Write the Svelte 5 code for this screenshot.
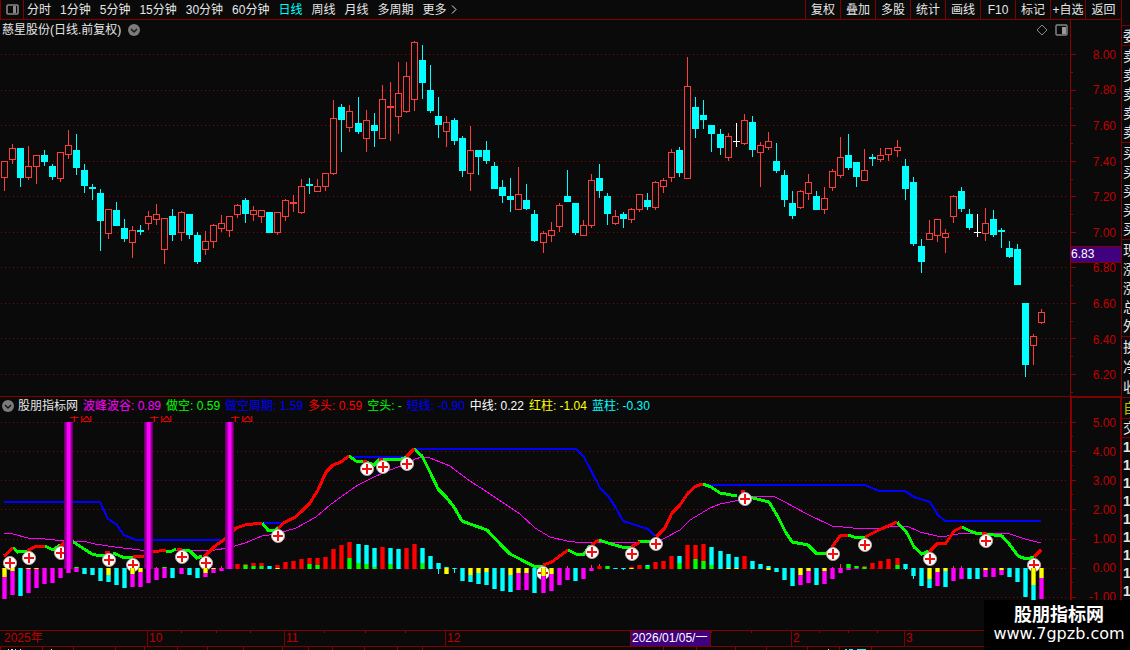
<script>
  const periods = ["分时", "1分钟", "5分钟", "15分钟", "30分钟", "60分钟", "日线", "周线", "月线", "多周期", "更多"];
  const tools = ["复权", "叠加", "多股", "统计", "画线", "F10", "标记", "+自选", "返回"];
  let current = "日线";

  // high, body top, body bottom, low, kind: r -> up, c -> down, w -> flat
  const candles = `161 161 178 191 r|144 148 160 164 r|148 148 178 187 c|146 166 178 180 r|155 155 167 184 r|150 155 162 166 c|164 166 177 180 c|152 152 179 182 r
130 145 155 159 r|134 150 168 175 c|164 170 186 193 c|184 187 189 200 c|189 193 221 251 c|209 209 234 239 r|202 210 226 226 c|219 228 239 242 c
226 230 243 258 r|225 230 232 235 c|211 216 224 230 r|204 214 220 225 r|218 218 250 264 r|209 216 235 241 c|211 212 233 241 r|214 214 235 239 c
232 235 262 264 c|231 241 250 255 r|224 225 242 248 r|215 223 229 232 r|216 216 231 237 r|204 205 215 218 r|198 200 214 223 c|206 210 215 221 r
210 210 217 223 r|212 212 233 233 c|212 212 233 235 r|199 200 217 221 r|195 202 204 212 r|179 186 213 214 r|178 184 186 194 c|179 186 192 192 r
173 173 187 191 r|100 118 174 175 r|104 107 120 152 c|105 111 128 132 r|97 123 132 134 c|110 120 139 152 r|113 125 131 147 c|85 99 139 139 r
82 106 108 141 r|62 93 117 134 r|62 76 112 113 r|41 42 100 111 r|45 60 83 99 c|65 90 111 113 c|97 116 125 138 c|116 122 132 147 r
118 120 141 145 c|136 138 171 177 c|126 150 174 191 r|150 150 157 175 c|141 150 161 164 c|162 166 189 189 c|180 187 196 203 c|178 196 200 212 c
167 194 210 210 r|184 200 209 210 c|210 214 241 242 c|231 233 243 253 r|222 230 236 242 r|203 205 227 232 r|170 196 202 202 c|203 203 233 235 c
220 225 236 236 r|174 180 226 228 r|164 178 191 198 c|193 196 214 225 c|210 216 224 225 r|212 214 219 228 c|208 209 220 223 r|194 194 210 212 r
193 200 207 210 c|181 182 208 210 r|178 180 187 193 r|149 152 178 182 r|147 150 173 177 c|57 86 179 179 r|97 107 129 138 c|100 115 120 129 c
125 125 134 152 c|129 134 148 155 c|133 136 158 161 r|123 141 142 147 w|114 120 144 145 r|116 122 150 157 c|142 145 153 187 r|132 141 148 150 r
143 161 171 173 c|170 175 200 207 c|191 203 216 219 c|190 191 208 209 r|174 182 194 200 r|191 196 210 210 c|187 198 210 214 r|169 171 188 191 r
137 157 176 178 r|134 155 168 170 c|162 162 177 187 c|149 170 181 181 r|154 157 159 166 c|148 155 160 162 r|148 148 155 161 r|140 147 151 157 r
159 166 189 200 c|177 182 244 246 c|239 246 262 273 c|220 233 240 240 r|219 219 236 242 r|229 233 238 253 r|195 196 217 223 r|187 191 209 212 c
209 214 228 230 c|214 232 233 237 w|208 223 234 241 r|210 219 235 237 c|228 230 232 248 c|241 248 257 258 c|244 249 285 285 c|303 303 365 377 c
334 336 346 365 r|309 312 323 324 r`
    .split(/[|\n]/)
    .map((row, i) => {
      const [high, top, bottom, low, kind] = row.trim().split(" ");
      return { x: centre(i), high: +high, top: +top, bottom: +bottom, low: +low, kind };
    });

  // stacked segments of every bar: colour, start, end (t and w are thin wicks)
  const bars = `y568-577 m577-599|y568-571 m571-595|c568-596|y568-569 m569-593|y568-569 m569-588|m568-584|m568-583|m568-578|m568-573|g567-568 m568-572
c568-574|c568-575|c568-581|y568-575 c575-582|c568-585|c568-588|y568-574 m574-587|y568-572 m572-587|m568-583|m568-580 t567-568
g567-568 m568-578|c568-578|m568-574|c568-575|c568-578|y568-573 m573-577|y568-569 m569-573|m568-571 t566-568||r564-569
r564-565 g565-569|r563-566 g566-569|r563-566 g566-569|c566-569|r565-568 y568-569|r562-569|r561-569|r559-569|r558-564 g564-569|r558-565 g565-569
r557-569|r549-569|r545-569|r542-558 g558-569|c544-563 g563-569|c545-564 g564-569|c548-567 g567-569|r547-569|c548-564 g564-569|c549-569
r548-569|r544-569|c548-563 g563-569|c556-569|c563-569 w569-574|c567-568 y568-574|c568-569 w569-573|c568-581|y568-575 c575-582|y568-573 c573-584
y568-572 c572-585|c568-589|c568-591|y568-575 c575-592|y568-573 m573-590|y568-573 m573-590|c568-593|y568-576 m576-593|y568-574 m574-591|m568-585
m568-580 t566-568|c568-581|m568-579|m568-571 t565-568|r566-569 t564-566|g566-569|c568-569|c568-569 w569-570|r567-568 y568-569|r565-569
c565-566 g566-569|r562-569|r561-569|r556-569|c556-563 g563-569|r545-569|r545-559 g559-569|r544-561 g561-569|c547-565 g565-569|c551-569
c554-568 y568-569|c557-568 y568-569|r556-569|c561-569|c564-569|c566-568 y568-570|c568-572|c568-580|c568-586|y568-575 m575-585
y568-571 m571-583|c568-585|y568-571 m571-584|m568-579 t567-568|m568-573 t564-568|g564-568 m568-570|g566-568 m568-569|r566-567 g567-569|r563-569|r561-569
r559-569|r558-565 g565-569|c564-569 w569-570|c568-576 w576-579|c568-586|y568-579 c579-588|y568-572 m572-586|y568-571 c571-587|m568-581 t566-568|m568-579 t566-568
c568-579|c568-579|y568-570 m570-577|m568-577|y568-570 m570-575|c568-577|c568-582|c568-597|y568-585 c585-602|y568-578 m578-599`
    .split(/[|\n]/)
    .flatMap((row, i) =>
      row.trim().split(" ").filter(Boolean).map((part) => {
        const [from, to] = part.slice(1).split("-").map(Number);
        const thin = part[0] === "t" || part[0] === "w";
        return { x: centre(i), from, to, thin, kind: part[0] };
      })
    );

  const blueLines = [
    "4,502 100,502 108,519 116,524 124,535 136,540 225,540",
    "262,523 283,523",
    "349,457 407,457",
    "414,449 576,449 584,457 600,488 608,496 616,508 623,521 648,529 655,536",
    "703,485 865,485 879,491 905,491 914,497 930,502 938,515 945,521 1041,521",
  ];

  const middleLine =
    "4,533 13,534 28,538 45,539 65,541 83,541 95,544 115,547 140,550 215,550 228,548 245,543 262,536 276,534 296,528 316,517 330,505 345,494 358,485 372,478 385,472 398,467 407,464 415,459 422,457 430,458 450,466 470,481 487,492 520,514 535,528 550,537 567,541 583,543 600,542 647,542 663,539 680,530 690,520 710,508 720,504 740,500 753,496 773,496 783,501 807,514 832,526 853,528 873,529 897,526 907,526 920,532 937,536 947,536 963,533 1007,533 1025,539 1041,543";

  const greenLines = [
    "13,548 18,552 27,551", "45,546 53,550 60,545", "72,541 84,549 92,554 100,556 105,555", "113,553 125,558 133,557",
    "166,551 170,552 176,549", "181,550 190,551 197,558 202,556", "262,523 268,530 275,530 278,528",
    "349,456 356,461 363,461", "366,462 374,465 380,459", "383,459 398,460 407,457",
    "414,449 422,456 430,472 438,489 446,497 454,507 462,521 470,524 487,530 502,546 510,554 520,559 535,567 543,566",
    "568,550 576,554 584,554 590,545", "599,540 608,543 622,547 632,547", "638,542 650,541",
    "703,484 711,487 720,493 737,496", "745,496 753,498 769,502 778,517 785,531 792,542 808,545 816,553 826,553 832,550",
    "848,535 854,537 865,537", "897,522 907,533 914,547 922,554 929,551", "962,527 970,531 978,534 983,533",
    "986,534 1002,536 1010,545 1018,556 1026,559 1034,557",
  ];

  const redLines = [
    "4,556 13,548", "27,551 36,546 45,546", "58,549 66,541", "105,552 110,553", "133,557 145,556 152,552 166,550",
    "177,549 182,549", "204,557 215,546 225,539 236,528 245,525 262,523",
    "278,528 285,522 294,518 302,511 310,503 318,490 326,472 333,465 341,462 349,456",
    "363,461 367,461", "379,459 383,459", "406,457 414,449", "543,565 552,562 568,550", "591,545 599,540", "631,547 640,542",
    "656,537 665,528 672,513 680,505 688,493 696,486 703,484", "741,491 745,491", "832,547 840,536 848,535",
    "865,537 881,529 897,522", "929,552 938,543 946,543 954,531 962,527", "982,533 987,534", "1034,557 1041,550",
  ];

  const markers = [
    [10, 563], [29, 558], [61, 553], [109, 560], [133, 565], [182, 557], [206, 563], [278, 536], [367, 469], [383, 467], [407, 464],
    [543, 573], [592, 552], [632, 554], [656, 544], [745, 499], [833, 554], [865, 545], [930, 559], [986, 541], [1034, 565],
  ];
  const peaks = [64, 144, 225];

  const priceTicks = ["8.00", "7.80", "7.60", "7.40", "7.20", "7.00", "6.80", "6.60", "6.40", "6.20"];
  const priceGrid = [54, 90, 125, 161, 196, 232, 267, 303, 338, 374];
  const valueTicks = ["5.00", "4.00", "3.00", "2.00", "1.00", "0.00", "-1.00"];
  const valueGrid = [422, 451, 480, 509, 539, 568, 597];

  const legend = [
    ["波峰波谷: 0.89", "magenta"],
    ["做空: 0.59", "green"],
    ["做空周期: 1.59", "blue"],
    ["多头: 0.59", "red"],
    ["空头: -", "green"],
    ["短线: -0.90", "blue"],
    ["中线: 0.22", "white"],
    ["红柱: -1.04", "yellow"],
    ["蓝柱: -0.30", "cyan"],
  ];

  const dates = ["2025年", "10", "11", "12", "2026/01/05/一", "", "2", "3"];
  const dateTicks = [181, 216, 250, 324, 365, 405, 711, 751, 819, 848, 877];
  const tabTicks = [0, 42, 73, 115, 144, 177, 207, 243, 282, 308, 332, 364, 397, 422, 663, 696, 735, 766, 807, 839, 871];

  const quoteGroups = [["委"], ["卖", "卖", "卖", "卖", "卖"], ["买", "买", "买", "买", "买"], ["现", "涨", "涨", "总", "外"], ["换", "净", "收"]];
  const trades = [1, 1, 1, 1, 1, 1, 1, 1, 1];

  function centre(i) {
    return 4 + 8 * i + Math.floor((i + 1) * 0.0447);
  }
</script>

<div class="terminal">
  <main>
    <nav class="topbar">
      <button class="panel-toggle" aria-label="panel">
        <svg width="13" height="11" viewBox="0 0 13 11">
          <rect x="1" y="1" width="11" height="9" rx="1" fill="none" stroke="#888" stroke-width="1.6" />
          <rect x="7" y="2" width="3" height="7" fill="#888" />
        </svg>
      </button>
      <div class="periods">
        {#each periods as period}
          <button class:selected={period === current} on:click={() => (current = period)}>
            {period}{#if period === "更多"}<svg class="more" width="7" height="9" viewBox="0 0 7 9"><path d="M1 0.5L5 4.5L1 8.5" fill="none" stroke="#ddd" /></svg>{/if}
          </button>
        {/each}
      </div>
      <div class="tools">
        {#each tools as tool}
          <button>{tool}</button>
        {/each}
      </div>
    </nav>

    <section class="pane">
      <div class="plot">
        <svg class="drawing" viewBox="0 20 1070 376" preserveAspectRatio="none" shape-rendering="crispEdges">
          {#each priceGrid as y}
            <line class="grid" x1="1" x2="1067" y1={y + 0.5} y2={y + 0.5} />
          {/each}
          {#each candles as c}
            <rect class={c.kind} x={c.x} y={c.high} width="1" height={c.top - c.high} />
            <rect class={c.kind} x={c.x} y={c.bottom} width="1" height={c.low - c.bottom} />
            {#if c.kind === "r" && c.bottom - c.top > 2}
              <rect class="hollow" x={c.x - 2.5} y={c.top + 0.5} width="6" height={c.bottom - c.top - 1} />
            {:else}
              <rect class={c.kind} x={c.x - 3} y={c.top} width="7" height={c.bottom - c.top} />
            {/if}
          {/each}
        </svg>
        <header class="caption">
          <h1>慈星股份(日线.前复权)</h1>
          <svg width="12" height="12" viewBox="0 0 12 12">
            <circle cx="6" cy="6" r="6" fill="#7c7c7c" />
            <path d="M3 5L6 8L9 5" fill="none" stroke="#151515" stroke-width="1.5" />
          </svg>
          <div class="caption-icons">
            <svg width="12" height="12" viewBox="0 0 12 12"><path d="M6 1L11 6L6 11L1 6Z" fill="none" stroke="#888" /></svg>
            <svg width="13" height="12" viewBox="0 0 13 12">
              <rect x="1" y="1" width="11" height="10" rx="1" fill="none" stroke="#888" stroke-width="1.4" />
              <rect x="7" y="3" width="4" height="7" fill="#999" />
            </svg>
          </div>
        </header>
      </div>
      <div class="axis price-axis">
        <svg class="drawing" viewBox="0 20 50 376" preserveAspectRatio="none" shape-rendering="crispEdges">
          {#each priceGrid as y}
            <rect class="tick" x="0" {y} width="5" height="1" />
            <rect class="tick" x="0" y={y + 18} width="2" height="1" />
          {/each}
        </svg>
        {#each priceTicks as tick}
          <span>{tick}</span>
        {/each}
        <div class="cursor-price">6.83</div>
      </div>
    </section>

    <section class="pane lower">
      <div class="plot">
        <svg class="drawing" viewBox="0 397 1070 233" preserveAspectRatio="none" shape-rendering="crispEdges">
          <defs>
            <linearGradient id="peak">
              <stop offset="0" stop-color="#600060" />
              <stop offset="0.25" stop-color="#a000a0" />
              <stop offset="0.4" stop-color="#ff00ff" />
              <stop offset="0.65" stop-color="#ff00ff" />
              <stop offset="0.8" stop-color="#a000a0" />
              <stop offset="1" stop-color="#500050" />
            </linearGradient>
            <clipPath id="signals"><rect x="0" y="416" width="1070" height="6" /></clipPath>
          </defs>
          {#each valueGrid as y}
            <line class="grid" x1="1" x2="1067" y1={y + 0.5} y2={y + 0.5} />
          {/each}
          {#each blueLines as points}
            <polyline class="line-blue" {points} />
          {/each}
          <polyline class="line-middle" points={middleLine} />
          {#each greenLines as points}
            <polyline class="line-green" {points} />
          {/each}
          {#each redLines as points}
            <polyline class="line-red" {points} />
          {/each}
          {#each markers as [x, y]}
            <g shape-rendering="auto">
              <circle cx={x} cy={y} r="6.5" fill="#fff" stroke="#b5aaa5" />
              <path d="M{x - 5} {y}H{x + 5}M{x} {y - 5}V{y + 5}" stroke="#f01010" stroke-width="2" />
            </g>
          {/each}
          {#each bars as b}
            {#if b.thin}
              <rect class={b.kind} x={b.x} y={b.from} width="1" height={b.to - b.from} />
            {:else}
              <rect class="bar {b.kind}" x={b.x - 2} y={b.from} width="5" height={b.to - b.from} />
              <rect class="shade" x={b.x - 2} y={b.from} width="1" height={b.to - b.from} />
              <rect class="shade" x={b.x + 2} y={b.from} width="1" height={b.to - b.from} />
            {/if}
          {/each}
          {#each peaks as x}
            <rect {x} y="422" width="9" height="147" fill="url(#peak)" />
            <text x={x + 4} y="422" clip-path="url(#signals)">主凶</text>
          {/each}
        </svg>
        <header class="legend">
          <svg width="12" height="12" viewBox="0 0 12 12">
            <circle cx="6" cy="6" r="6" fill="#7c7c7c" />
            <path d="M3 5L6 8L9 5" fill="none" stroke="#151515" stroke-width="1.5" />
          </svg>
          <div class="values">
            <h2>股朋指标网</h2>
            {#each legend as [label, colour]}
              <span class={colour}>{label}</span>
            {/each}
          </div>
        </header>
      </div>
      <div class="axis value-axis">
        <svg class="drawing" viewBox="0 397 50 233" preserveAspectRatio="none" shape-rendering="crispEdges">
          {#each valueGrid as y}
            <rect class="tick" x="0" {y} width="5" height="1" />
            <rect class="tick" x="0" y={y + 14} width="2" height="1" />
          {/each}
        </svg>
        {#each valueTicks as tick}
          <span>{tick}</span>
        {/each}
      </div>
    </section>

    <footer>
      <div class="dates">
        <svg class="drawing" viewBox="0 0 1121 15" preserveAspectRatio="none" shape-rendering="crispEdges">
          {#each dateTicks as x}
            <rect class="tick" {x} y="0" width="1" height="2" />
          {/each}
        </svg>
        {#each dates as date}
          <span class:cursor={date.includes("/")}>{date}</span>
        {/each}
      </div>
      <div class="tabs">
        <svg class="drawing" viewBox="0 0 1121 3" preserveAspectRatio="none" shape-rendering="crispEdges">
          {#each tabTicks as x}
            <rect class="tick" {x} y="0" width="1" height="3" />
          {/each}
          <path d="M8 2.5h1M11 2.5h2M15 2.5h1M20 2.5h1M51 2.5h1M828 2.5h1" stroke="#ddd" />
          <path d="M845 2.5h2M849 2.5h4M857 2.5h9" stroke="#0ff" />
        </svg>
      </div>
    </footer>
  </main>

  <aside>
    {#each quoteGroups as group}
      <div class="group">
        {#each group as item}
          <span>{item}</span>
        {/each}
      </div>
    {/each}
    <div class="group own"><span>自</span></div>
    <div class="group deal"><span>交</span></div>
    <div class="trades">
      {#each trades as trade}
        <span>{trade}</span>
      {/each}
    </div>
  </aside>

  <div class="watermark">
    <strong>股朋指标网</strong>
    <span>www.7gpzb.com</span>
  </div>
</div>

<style>
  :global(body) {
    background: #0a0a0a;
  }

  .terminal {
    position: relative;
    display: flex;
    height: 100vh;
    overflow: hidden;
    background: #0a0a0a;
    color: #e6e6e6;
    font-family: "Liberation Sans", "Noto Sans CJK SC", sans-serif;
    font-size: 12px;
    line-height: 16px;
  }

  .terminal * {
    box-sizing: border-box;
  }

  main {
    flex: 1;
    min-width: 0;
    display: grid;
    grid-template-rows: 20px minmax(0, 376fr) minmax(0, 234fr) 20px;
  }

  button {
    padding: 0;
    border: 0;
    background: none;
    color: inherit;
    font: inherit;
    white-space: nowrap;
    cursor: pointer;
  }

  h1,
  h2 {
    margin: 0;
    font-size: 12px;
    font-weight: 400;
  }

  .topbar {
    display: flex;
    border-bottom: 1px solid #800000;
  }

  .panel-toggle {
    display: flex;
    align-items: center;
    justify-content: center;
    width: 24px;
    border: solid #800000;
    border-width: 0 1px;
  }

  .periods {
    flex: 1;
    display: flex;
    align-items: center;
    gap: 9px;
    padding-left: 3px;
    overflow: hidden;
  }

  .periods .selected {
    color: #00ffff;
  }

  .more {
    margin-left: 4px;
  }

  .tools {
    display: grid;
    grid-template-columns: repeat(8, 35px) 36px;
  }

  .tools button {
    border-left: 1px solid #800000;
  }

  .pane {
    display: flex;
    min-height: 0;
  }

  .lower {
    border-top: 1px solid #800000;
  }

  .plot {
    position: relative;
    flex: 1;
    min-width: 0;
  }

  .drawing {
    position: absolute;
    inset: 0;
    width: 100%;
    height: 100%;
  }

  .caption {
    position: relative;
    display: flex;
    align-items: center;
    gap: 7px;
    height: 19px;
    padding: 0 2px;
  }

  .caption-icons {
    display: flex;
    gap: 7px;
    margin-left: auto;
  }

  .legend {
    position: relative;
    display: flex;
    align-items: center;
    gap: 4px;
    height: 17px;
    padding-left: 2px;
    white-space: nowrap;
  }

  .values {
    display: flex;
    gap: 5px;
  }

  .grid {
    stroke: #800808;
    stroke-dasharray: 1 3;
  }

  .tick {
    fill: #900000;
  }

  .r,
  .t {
    fill: #ff3c3c;
  }

  .c,
  .w {
    fill: #00ffff;
  }

  rect.w {
    fill: #ffffff;
  }

  .lower rect.w {
    fill: #00ffff;
  }

  .bar.r {
    fill: #ff0000;
  }

  .m {
    fill: #ff00ff;
  }

  .y {
    fill: #ffff00;
  }

  .g {
    fill: #00ff00;
  }

  .shade {
    fill: #000000;
    opacity: 0.3;
  }

  .hollow {
    fill: #0a0a0a;
    stroke: #ff3c3c;
  }

  polyline {
    fill: none;
    stroke-width: 3;
  }

  .line-blue {
    stroke: #0000ff;
    stroke-width: 2;
  }

  .line-middle {
    stroke: #ff00ff;
    stroke-width: 1;
  }

  .line-green {
    stroke: #00ff00;
  }

  .line-red {
    stroke: #ff0000;
  }

  text {
    fill: #ff0000;
    font-size: 12px;
  }

  .magenta {
    color: #ff00ff;
  }

  .green {
    color: #00ff00;
  }

  .blue {
    color: #0000ff;
  }

  .red {
    color: #ff0000;
  }

  .white {
    color: #ffffff;
  }

  .yellow {
    color: #ffff00;
  }

  .cyan {
    color: #00ffff;
  }

  .axis {
    position: relative;
    display: flex;
    flex-direction: column;
    width: 51px;
    border-left: 1px solid #900000;
    color: #c00000;
    text-align: right;
  }

  .axis span {
    flex: 1;
    display: flex;
    align-items: center;
    justify-content: flex-end;
    padding-right: 5px;
  }

  .price-axis {
    padding: 17px 0 3px;
  }

  .value-axis {
    padding: 11px 0 18px;
    box-shadow: inset 1px 1px #800000, inset -1px 0 #800000;
  }

  .cursor-price {
    position: absolute;
    top: 60%;
    left: 0;
    width: 100%;
    border: solid #800000;
    border-width: 1px 0;
    background: #400080;
    color: #ffffff;
    line-height: 15px;
    text-align: left;
  }

  footer {
    border-top: 1px solid #800000;
  }

  .dates {
    position: relative;
    display: grid;
    grid-template-columns: 147fr 137fr 161fr 185fr 80fr 81fr 113fr 217fr;
    height: 16px;
    border-bottom: 1px solid #800000;
    color: #c00000;
  }

  .dates span {
    padding-left: 1px;
    border-left: 1px solid #800000;
    white-space: nowrap;
    line-height: 15px;
  }

  .dates span:first-of-type {
    padding-left: 4px;
    border: 0;
  }

  .dates .cursor {
    background: #400080;
    color: #ffffff;
  }

  .tabs {
    position: relative;
    height: 3px;
  }

  aside {
    width: 9px;
    padding-top: 25px;
    overflow: hidden;
    border-left: 1px solid #800000;
    font-size: 14px;
  }

  .group {
    display: flex;
    flex-direction: column;
    justify-content: space-around;
    height: 97px;
    padding-left: 1px;
    border-top: 1px solid #800000;
  }

  .group:first-child {
    height: 20px;
  }

  .group:nth-child(5) {
    height: 61px;
  }

  .own {
    height: 21px;
    color: #c0c000;
  }

  .deal {
    height: 19px;
  }

  .trades {
    display: flex;
    flex-direction: column;
    padding-left: 1px;
    border-top: 1px solid #800000;
    font-size: 14px;
    font-weight: 700;
    line-height: 18px;
  }

  .watermark {
    position: absolute;
    right: 0;
    bottom: 0;
    display: flex;
    flex-direction: column;
    align-items: center;
    width: 146px;
    height: 50px;
    padding: 5px 0 0 4px;
    background: #000000;
    color: #ffffff;
    line-height: 20px;
  }

  .watermark strong {
    font-size: 18px;
  }

  .watermark span {
    font-family: "DejaVu Sans", sans-serif;
    font-size: 16px;
    line-height: 18px;
  }
</style>
